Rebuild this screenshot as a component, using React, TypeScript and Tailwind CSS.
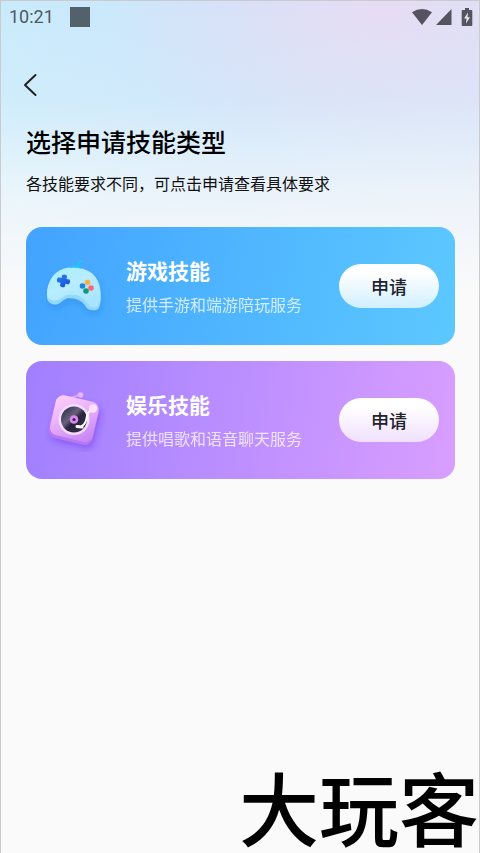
import React from "react";

function StatusBar() {
  return (
    <div className="flex h-8 items-center justify-between pl-2 pr-1.5 text-[#4d5a63]">
      <div className="flex items-center gap-4">
        <span className="font-['Roboto',sans-serif] text-[18px] leading-5">10:21</span>
        <span className="size-5 bg-[#52616a]" />
      </div>
      <div className="flex items-center text-[#54535f]">
        <svg width="20" height="16" viewBox="0 0 20 16" fill="currentColor" aria-hidden="true">
          <path d="M0 3.2Q10-3.2 20 3.2L10 16Z" />
        </svg>
        <svg className="ml-1" width="16" height="16" viewBox="0 0 16 16" fill="currentColor" aria-hidden="true">
          <path d="M15.5 0V16H0Z" />
        </svg>
        <svg className="ml-[9px]" width="12" height="18" viewBox="0 0 12 18" aria-hidden="true">
          <path d="M4 0h4v2h2.4q.9 0 .9.9v14.2q0 .9-.9.9H1.6q-.9 0-.9-.9V2.900q0-.9.9-.9H4Z" fill="currentColor" />
          <path d="M7 4.500 3 10.500h2.500L5 15.500l4-6.300H6.500Z" fill="#e9e6f3" />
        </svg>
      </div>
    </div>
  );
}

function GamepadIcon() {
  return (
    <svg width="64" height="64" viewBox="0 0 64 64" aria-hidden="true">
      <defs>
        <linearGradient id="pad" x1="0" y1="0" x2="0.6" y2="1">
          <stop offset="0" stopColor="#a5f0f8" />
          <stop offset="0.5" stopColor="#b9ecff" />
          <stop offset="1" stopColor="#a8e4ff" />
        </linearGradient>
        <linearGradient id="cross" x1="0" y1="0" x2="1" y2="1">
          <stop offset="0" stopColor="#2f86ee" />
          <stop offset="1" stopColor="#1248d8" />
        </linearGradient>
        <filter id="padShadow" x="-30%" y="-30%" width="160%" height="170%">
          <feDropShadow dx="1" dy="4" stdDeviation="3" floodColor="#1673d8" floodOpacity="0.3" />
        </filter>
      </defs>
      <path d="M35 14c2-4 0-5 4-7" fill="none" stroke="#20c8ee" strokeWidth="2" strokeLinecap="round" />
      <g filter="url(#padShadow)">
        <path d="M21 16C27 13 37 13 44 17C53 20 58 30 58.500 40C59 47 58 53 56 55C54 57 46 57 44 53C41 47 34 44 27 44C22 44 18 51 13 50.500C7 50 4.500 46 5 42C5 30 11 19 21 16Z" fill="#92dafc" />
        <path d="M21 15C27 13 37 13 44 16C53 19 58 28 58.500 38C59 45 58 50 56 52C53 55 48 53 46 50C42 43 34 40 28 40.500C21 41 19 46 14 46.500C8 47 5 44 5 40C5 29 11 18 21 15Z" fill="url(#pad)" />
      </g>
      <path d="M27 14q7-5 13 .8q-7-1.500-13-.8Z" fill="#20d2ee" />
      <g transform="translate(-2 -1) rotate(12 24 28)" fill="url(#cross)">
        <path d="M21 22.500q3-2 5 0v3h3q2.500 2.500 0 5h-3v3q-2.500 2-5 0v-3h-3q-2.500-2.500 0-5h3Z" />
      </g>
      <circle cx="45.500" cy="28.500" r="2.800" fill="#ffad45" />
      <circle cx="40.500" cy="32" r="2.800" fill="#2083dc" />
      <circle cx="49" cy="34" r="2.800" fill="#ff6577" />
      <circle cx="44" cy="37" r="2.800" fill="#129971" />
    </svg>
  );
}

function TurntableIcon() {
  return (
    <svg width="64" height="64" viewBox="0 0 64 64" aria-hidden="true">
      <defs>
        <linearGradient id="deck" x1="0" y1="0" x2="0.8" y2="1">
          <stop offset="0" stopColor="#ffd4fa" />
          <stop offset="0.5" stopColor="#e8b0fa" />
          <stop offset="1" stopColor="#c887f7" />
        </linearGradient>
        <linearGradient id="disc" x1="0" y1="0" x2="1" y2="1">
          <stop offset="0" stopColor="#222136" />
          <stop offset="0.4" stopColor="#68617c" />
          <stop offset="0.55" stopColor="#28243b" />
          <stop offset="1" stopColor="#3b3552" />
        </linearGradient>
        <filter id="deckShadow" x="-30%" y="-30%" width="170%" height="170%">
          <feDropShadow dx="2" dy="4" stdDeviation="3" floodColor="#6427e1" floodOpacity="0.4" />
        </filter>
      </defs>
      <path d="M23 11.500 38 7" stroke="#e6a4fc" strokeWidth="2" strokeLinecap="round" />
      <circle cx="38.500" cy="7" r="2.800" fill="#edb4fc" />
      <g filter="url(#deckShadow)">
        <rect x="9" y="12" width="45" height="42" rx="8" transform="rotate(13 32 33)" fill="#b678f3" />
        <rect x="10" y="10" width="44" height="41" rx="8" transform="rotate(13 32 32)" fill="url(#deck)" />
      </g>
      <circle cx="32" cy="31.500" r="15.500" fill="#f3dcff" />
      <circle cx="32" cy="31.500" r="13" fill="url(#disc)" />
      <circle cx="32" cy="31.500" r="4.300" fill="#d889ee" />
      <circle cx="32" cy="31.500" r="1.600" fill="#382752" />
      <path d="M51 20.500C50 25 46 21 45 28Q44 36 40 38" fill="none" stroke="#fff" strokeWidth="2" strokeLinecap="round" strokeLinejoin="round" />
      <path d="m35 38.500 5 .5" stroke="#fff" strokeWidth="3" strokeLinecap="round" />
      <circle cx="51" cy="20.500" r="4.200" fill="#ffe0fc" />
    </svg>
  );
}

interface SkillCardProps {
  title: string;
  description: string;
  icon: React.ReactNode;
  cardClass: string;
  buttonClass: string;
}

function SkillCard({ title, description, icon, cardClass, buttonClass }: SkillCardProps) {
  return (
    <section className={`flex items-center rounded-2xl px-4 py-[25px] ${cardClass}`}>
      <div className="shrink-0">{icon}</div>
      <div className="ml-5 flex-1 text-white">
        <h2 className="text-[21px] font-bold leading-9">{title}</h2>
        <p className="text-base leading-8 opacity-75">{description}</p>
      </div>
      <button
        type="button"
        className={`h-11 w-25 shrink-0 rounded-full text-[18px] font-medium text-[#222329] ${buttonClass}`}
      >
        申请
      </button>
    </section>
  );
}

export default function App() {
  return (
    <div className="flex min-h-screen flex-col border-x border-t border-[#cbcbcf] bg-[#fafafa] bg-[linear-gradient(180deg,transparent_0px,rgba(250,250,250,0.12)_100px,rgba(250,250,250,0.65)_190px,#fafafa_290px),radial-gradient(ellipse_280px_150px_at_80%_10px,#e6dcf3_0%,rgba(230,220,243,0.55)_45%,rgba(230,220,243,0)_100%),linear-gradient(90deg,#caebfc_0%,#cbe5fb_50%,#d3e4f9_100%)] font-['Noto_Sans_CJK_SC',sans-serif]">
      <StatusBar />
      <main className="flex flex-1 flex-col pl-[25px] pr-6">
        <header className="flex h-22 items-start pt-[38px]">
          <button type="button" aria-label="返回" className="-ml-1 text-[#222]">
            <svg width="20" height="28" viewBox="0 0 20 28" fill="none" stroke="currentColor" strokeWidth="2" strokeLinecap="round" strokeLinejoin="round">
              <path d="M13.500 4 3 14l10.500 10" />
            </svg>
          </button>
        </header>
        <h1 className="text-[25px] font-medium leading-10 text-black">选择申请技能类型</h1>
        <p className="mt-2 text-base leading-7 text-[#111]">各技能要求不同，可点击申请查看具体要求</p>
        <div className="mt-[30px] flex flex-col gap-4">
          <SkillCard
            title="游戏技能"
            description="提供手游和端游陪玩服务"
            icon={<GamepadIcon />}
            cardClass="bg-linear-100 from-[#43a3ff] to-[#5cc8ff]"
            buttonClass="bg-linear-to-b from-white from-20% to-[#d0efff]"
          />
          <SkillCard
            title="娱乐技能"
            description="提供唱歌和语音聊天服务"
            icon={<TurntableIcon />}
            cardClass="bg-linear-100 from-[#a07fff] to-[#d99eff]"
            buttonClass="bg-linear-to-b from-white from-20% to-[#f0e0ff]"
          />
        </div>
      </main>
      <footer className="flex justify-end pb-2">
        <span className="text-[80px] font-medium leading-20 text-black">大玩客</span>
      </footer>
    </div>
  );
}
